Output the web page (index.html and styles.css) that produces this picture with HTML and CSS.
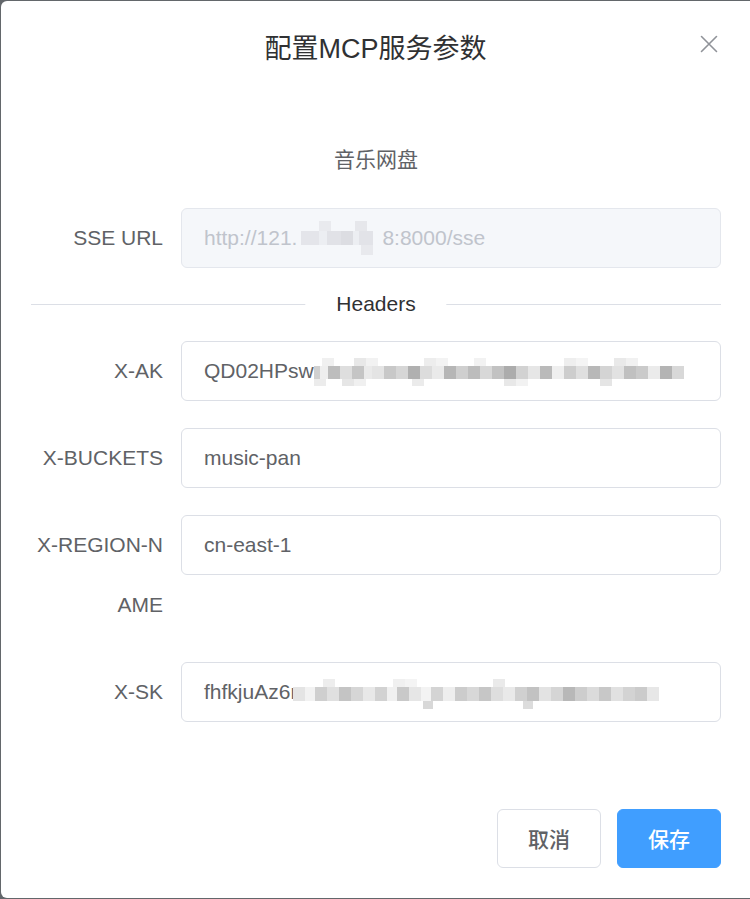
FILE: index.html
```html
<!DOCTYPE html>
<html lang="zh-CN">
<head>
<meta charset="utf-8">
<title>配置MCP服务参数</title>
<link rel="stylesheet" href="styles.css">
</head>
<body>
<div class="dialog">
  <div class="dialog-header">
    <span class="dialog-title">配置MCP服务参数</span>
    <button class="dialog-close" type="button" aria-label="关闭">
      <svg width="24" height="24" viewBox="0 0 24 24"><path d="M4.5 4.5 L19.5 19.5 M19.5 4.5 L4.5 19.5" stroke="#909399" stroke-width="1.6" fill="none" stroke-linecap="round"/></svg>
    </button>
  </div>
  <div class="dialog-body">
    <div class="service-name">音乐网盘</div>
    <div class="form-item">
      <label class="form-label">SSE URL</label>
      <div class="input input-disabled"><span>http://121.</span><span class="mosaic mosaic-url"></span><span>8:8000/sse</span></div>
    </div>
    <div class="divider"><span class="divider-text">Headers</span></div>
    <div class="form-item">
      <label class="form-label">X-AK</label>
      <div class="input"><span>QD02HPsw</span><span class="mosaic mosaic-ak"></span></div>
    </div>
    <div class="form-item">
      <label class="form-label">X-BUCKETS</label>
      <div class="input"><span>music-pan</span></div>
    </div>
    <div class="form-item">
      <label class="form-label">X-REGION-NAME</label>
      <div class="input"><span>cn-east-1</span></div>
    </div>
    <div class="form-item">
      <label class="form-label">X-SK</label>
      <div class="input"><span>fhfkjuAz6r</span><span class="mosaic mosaic-sk"></span></div>
    </div>
  </div>
  <div class="dialog-footer">
    <button class="btn btn-default" type="button">取消</button>
    <button class="btn btn-primary" type="button">保存</button>
  </div>
</div>
</body>
</html>
```
FILE: styles.css
```css
* { box-sizing: border-box; }
html, body { margin: 0; padding: 0; }
body {
  background: #63676b;
  font-family: "Liberation Sans", Arial, "Noto Sans CJK SC", sans-serif;
  width: 750px;
  height: 899px;
  overflow: hidden;
}
.dialog {
  margin: 1px 0 0 1px;
  width: 749px;
  height: 897px;
  background: #fff;
  border-radius: 6px 0 0 6px;
  display: flex;
  flex-direction: column;
}
.dialog-header {
  position: relative;
  padding: 30px 30px 15px;
  text-align: center;
}
.dialog-title {
  font-size: 27px;
  line-height: 36px;
  color: #303133;
}
.dialog-close {
  position: absolute;
  top: 31px;
  right: 29px;
  width: 24px;
  height: 24px;
  padding: 0;
  border: 0;
  background: transparent;
  display: block;
}
.dialog-close svg { display: block; }
.dialog-body {
  padding: 45px 29px 45px 30px;
  color: #606266;
  font-size: 21px;
}
.service-name {
  text-align: center;
  line-height: 30px;
  margin: 18px 0 33px;
  color: #606266;
}
.form-item {
  display: flex;
  margin-bottom: 27px;
}
.form-label {
  flex: 0 0 150px;
  width: 150px;
  padding-right: 18px;
  text-align: right;
  line-height: 60px;
  font-size: 21px;
  color: #606266;
  word-break: break-all;
}
.input {
  flex: 1;
  height: 60px;
  border: 1px solid #dcdfe6;
  border-radius: 6px;
  padding: 0 22px;
  display: flex;
  align-items: center;
  white-space: nowrap;
  overflow: hidden;
  font-size: 21px;
  color: #606266;
}
.input-disabled {
  background: #f5f7fa;
  border-color: #e4e7ed;
  color: #c0c4cc;
}
.divider {
  position: relative;
  height: 1px;
  margin: 36px 0;
  background: #dcdfe6;
}
.divider-text {
  position: absolute;
  left: 50%;
  top: 0;
  transform: translate(-50%, -50%);
  background: #fff;
  padding: 0 31px;
  font-size: 21px;
  line-height: 30px;
  color: #303133;
}
.dialog-footer {
  padding: 15px 29px 30px;
  display: flex;
  justify-content: flex-end;
  gap: 16px;
  margin-top: auto;
}
.btn {
  font-family: "Noto Sans CJK SC", sans-serif;
  font-size: 21px;
  font-weight: 500;
  line-height: 21px;
  height: 59px;
  width: 104px;
  padding: 0;
  border-radius: 6px;
  border: 1px solid #dcdfe6;
  background: #fff;
  color: #606266;
}
.btn-primary {
  background: #409eff;
  border-color: #409eff;
  color: #fff;
}
.mosaic {
  display: inline-block;
  flex: none;
  background-repeat: no-repeat;
}
.mosaic-ak {
  width: 374px;
  height: 28px;
  margin-top: 2px;
  background-image:
    linear-gradient(90deg, transparent 0 8px, #f0f0f0 8px 20px, transparent 20px 40px, #e8e8e8 40px 52px, #f2f2f2 52px 64px, transparent 64px 110px, #ededed 110px 122px, #f3f3f3 122px 134px, transparent 134px 160px, #f2f2f2 160px 172px, transparent 172px 250px, #eeeeee 250px 262px, #f4f4f4 262px 274px, transparent 274px 300px, #e9e9e9 300px 312px, #f1f1f1 312px 324px, transparent 324px 374px),
    linear-gradient(90deg, #d0d0d0 0 6px, #eeeeee 6px 14px, #bdbdbd 14px 26px, #dedede 26px 38px, #c5c5c5 38px 50px, #eaeaea 50px 58px, #e4e4e4 58px 70px, #c8c8c8 70px 82px, #d6d6d6 82px 94px, #b0b0b0 94px 106px, #dcdcdc 106px 118px, #eaeaea 118px 130px, #b6b6b6 130px 142px, #cfcfcf 142px 154px, #bcbcbc 154px 166px, #d8d8d8 166px 178px, #c2c2c2 178px 190px, #acacac 190px 202px, #d2d2d2 202px 214px, #e6e6e6 214px 226px, #bababa 226px 238px, #efefef 238px 250px, #cdcdcd 250px 262px, #dfdfdf 262px 274px, #b8b8b8 274px 286px, #d4d4d4 286px 298px, #e2e2e2 298px 310px, #c0c0c0 310px 322px, #cacaca 322px 334px, #ebebeb 334px 346px, #b4b4b4 346px 358px, #d8d8d8 358px 370px, transparent 370px 374px),
    linear-gradient(90deg, #ececec 0 12px, transparent 12px 28px, #e6e6e6 28px 40px, #f0f0f0 40px 52px, transparent 52px 98px, #ebebeb 98px 110px, transparent 110px 190px, #e8e8e8 190px 202px, #f2f2f2 202px 214px, transparent 214px 286px, #e5e5e5 286px 298px, transparent 298px 374px);
  background-size: 100% 8px, 100% 13px, 100% 7px;
  background-position: 0 0, 0 8px, 0 21px;
}
.mosaic-sk {
  width: 374px;
  height: 30px;
  margin-left: -4px;
  margin-top: 4px;
  background-image:
    linear-gradient(90deg, transparent 0 30px, #ededed 30px 42px, transparent 42px 100px, #f0f0f0 100px 112px, #f4f4f4 112px 124px, transparent 124px 200px, #eaeaea 200px 212px, transparent 212px 374px),
    linear-gradient(90deg, #e4e4e4 0 12px, #f2f2f2 12px 22px, #cfcfcf 22px 34px, #e0e0e0 34px 46px, #c4c4c4 46px 58px, #d6d6d6 58px 70px, #e8e8e8 70px 82px, #d2d2d2 82px 94px, #f0f0f0 94px 104px, #c9c9c9 104px 116px, #e6e6e6 116px 128px, #f3f3f3 128px 138px, #d4d4d4 138px 150px, #eeeeee 150px 162px, #cccccc 162px 174px, #d8d8d8 174px 186px, #c6c6c6 186px 198px, #dedede 198px 210px, #e9e9e9 210px 222px, #d0d0d0 222px 234px, #c2c2c2 234px 246px, #e3e3e3 246px 258px, #d5d5d5 258px 270px, #b8b8b8 270px 282px, #cdcdcd 282px 294px, #dbdbdb 294px 306px, #c8c8c8 306px 318px, #e1e1e1 318px 330px, #d3d3d3 330px 342px, #cbcbcb 342px 354px, #e7e7e7 354px 366px, transparent 366px 374px),
    linear-gradient(90deg, transparent 0 130px, #d8d8d8 130px 140px, transparent 140px 230px, #dcdcdc 230px 240px, transparent 240px 374px);
  background-size: 100% 8px, 100% 14px, 100% 8px;
  background-position: 0 0, 0 8px, 0 22px;
}
.mosaic-url {
  width: 86px;
  height: 34px;
  margin-right: -1px;
  background-image:
    linear-gradient(90deg, transparent 0 22px, #e9eaee 22px 34px, transparent 34px 58px, #e6e7eb 58px 70px, transparent 70px 86px),
    linear-gradient(90deg, transparent 0 4px, #e4e5ea 4px 22px, #eceef2 22px 30px, #e1e2e7 30px 44px, #dcdde2 44px 56px, #eceef2 56px 62px, #e2e3e8 62px 76px, transparent 76px 86px),
    linear-gradient(90deg, transparent 0 64px, #e8e9ed 64px 76px, transparent 76px 86px);
  background-size: 100% 10px, 100% 14px, 100% 10px;
  background-position: 0 0, 0 10px, 0 24px;
}
```
